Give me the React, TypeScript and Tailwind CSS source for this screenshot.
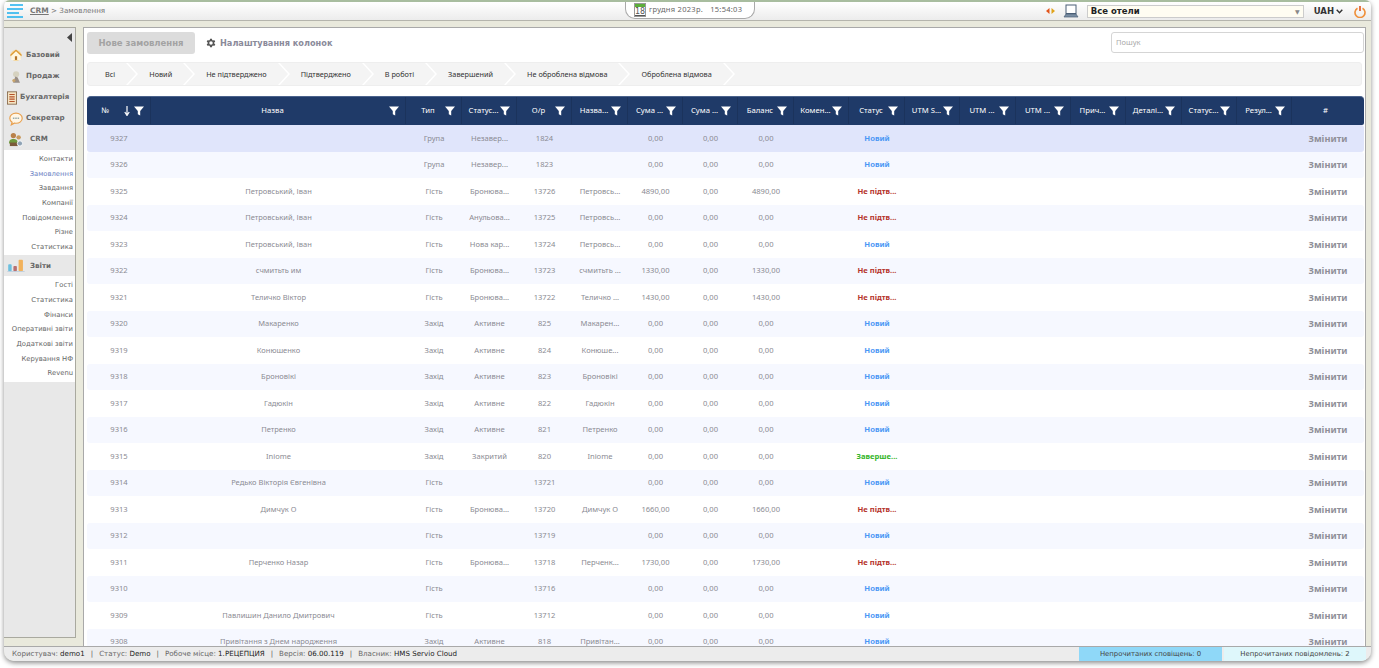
import React from "react";

const GRID =
  "grid grid-cols-[64px_255px_56px_55px_55px_56px_55px_55px_56px_55px_56px_55px_56px_55px_55px_56px_55px_55px_72px]";

const Funnel = () => (
  <svg width="10" height="10" viewBox="0 0 10 10" className="shrink-0">
    <path d="M0 .5h10L6.2 5v4.6L3.8 8.2V5z" fill="#fff" />
  </svg>
);

const headers = [
  "Назва", "Тип", "Статус...", "О/р", "Назва...", "Сума ...", "Сума ...", "Баланс", "Комен...", "Статус",
  "UTM S...", "UTM ...", "UTM ...", "Прич...", "Деталі...", "Статус...", "Резул...",
];

type Row = [string, string, string, string, string, string, string, string, string, string];
const N = "Новий";
const R = "Не підтв...";
const rows: Row[] = [
  ["9327", "", "Група", "Незавер...", "1824", "", "0,00", "0,00", "0,00", N],
  ["9326", "", "Група", "Незавер...", "1823", "", "0,00", "0,00", "0,00", N],
  ["9325", "Петровський, Іван", "Гість", "Бронюва...", "13726", "Петровсь...", "4890,00", "0,00", "4890,00", R],
  ["9324", "Петровський, Іван", "Гість", "Анульова...", "13725", "Петровсь...", "0,00", "0,00", "0,00", R],
  ["9323", "Петровський, Іван", "Гість", "Нова кар...", "13724", "Петровсь...", "0,00", "0,00", "0,00", N],
  ["9322", "счмитьть им", "Гість", "Бронюва...", "13723", "счмитьть ...", "1330,00", "0,00", "1330,00", R],
  ["9321", "Теличко Віктор", "Гість", "Бронюва...", "13722", "Теличко ...", "1430,00", "0,00", "1430,00", R],
  ["9320", "Макаренко", "Захід", "Активне", "825", "Макарен...", "0,00", "0,00", "0,00", N],
  ["9319", "Конюшенко", "Захід", "Активне", "824", "Конюше...", "0,00", "0,00", "0,00", N],
  ["9318", "Броновікі", "Захід", "Активне", "823", "Броновікі", "0,00", "0,00", "0,00", N],
  ["9317", "Гадюкін", "Захід", "Активне", "822", "Гадюкін", "0,00", "0,00", "0,00", N],
  ["9316", "Петренко", "Захід", "Активне", "821", "Петренко", "0,00", "0,00", "0,00", N],
  ["9315", "Iniome", "Захід", "Закритий", "820", "Iniome", "0,00", "0,00", "0,00", "Заверше..."],
  ["9314", "Редько Вікторія Євгенівна", "Гість", "", "13721", "", "0,00", "0,00", "0,00", N],
  ["9313", "Димчук О", "Гість", "Бронюва...", "13720", "Димчук О", "1660,00", "0,00", "1660,00", R],
  ["9312", "", "Гість", "", "13719", "", "0,00", "0,00", "0,00", N],
  ["9311", "Перченко Назар", "Гість", "Бронюва...", "13718", "Перченк...", "1730,00", "0,00", "1730,00", R],
  ["9310", "", "Гість", "", "13716", "", "0,00", "0,00", "0,00", N],
  ["9309", "Павлишин Данило Дмитрович", "Гість", "", "13712", "", "0,00", "0,00", "0,00", N],
  ["9308", "Привітання з Днем народження", "Захід", "Активне", "818", "Привітан...", "0,00", "0,00", "0,00", N],
];

const tabs = ["Всі", "Новий", "Не підтверджено", "Підтверджено", "В роботі", "Завершений", "Не оброблена відмова", "Оброблена відмова"];

const IconBase = () => (
  <svg width="14" height="13" viewBox="0 0 19 16"><circle cx="9.5" cy="8" r="7.5" fill="#f6d79a" /><path d="M3 8l6.5-6L16 8v6H3z" fill="#fff7e0" /><path d="M2 8l7.500-7L17 8" fill="none" stroke="#dc9a35" strokeWidth="1.800" /><rect x="8" y="9" width="3" height="5" fill="#b5762a" /></svg>
);
const IconSale = () => (
  <svg width="13" height="14" viewBox="0 0 17 17"><circle cx="8" cy="5" r="4" fill="#d6d2c0" /><path d="M4 16l3-8 3 1 3 7z" fill="#9a8f86" /><circle cx="5" cy="13" r="2" fill="#c9a46a" /></svg>
);
const IconBook = () => (
  <svg width="10" height="14" viewBox="0 0 13 17"><rect x=".5" y=".5" width="12" height="16" fill="#f4e3c2" stroke="#7b5a3a" /><path d="M3 4h7M3 7h7M3 10h7M3 13h7" stroke="#b5532a" strokeWidth="1.5" /></svg>
);
const IconSec = () => (
  <svg width="14" height="14" viewBox="0 0 18 17"><path d="M9 1c4.500 0 8 2.800 8 6.500S13.500 14 9 14c-.8 0-1.500-.1-2.200-.2L3 16l1-3.300C2.200 11.500 1 9.600 1 7.500 1 3.800 4.500 1 9 1z" fill="#fff6e6" stroke="#e8a04f" strokeWidth="1.500" /><path d="M5 7.500h8" stroke="#9aa" strokeWidth="2" strokeDasharray="2 1" /></svg>
);
const IconCrm = () => (
  <svg width="14" height="15" viewBox="0 0 16 17"><circle cx="5" cy="4" r="3" fill="#b9814a" /><path d="M0 13c0-4 2-5 5-5s5 1 5 5z" fill="#6f9a3e" /><circle cx="11" cy="6" r="2.500" fill="#c99a5e" /><rect x="1" y="12" width="9" height="4" fill="#7a5a3a" /><circle cx="12.500" cy="13" r="3" fill="#8fa3b5" stroke="#fff" /></svg>
);
const IconRep = () => (
  <svg width="18" height="13" viewBox="0 0 20 15"><rect x="1" y="6" width="4" height="8" rx="1" fill="#6cc0df" /><rect x="7" y="8" width="4" height="6" rx="1" fill="#b97070" /><rect x="13" y="1" width="5" height="13" rx="1" fill="#f2b25c" /><path d="M0 14.500h20" stroke="#bcd" /></svg>
);

const Group = ({ icon, label, items, active }: { icon: React.ReactNode; label: string; items: string[]; active?: string }) => (
  <>
    <div className="h-[21px] flex items-center font-bold text-[7.1px] text-[#666]">
      <span className="w-[26px] flex justify-center pl-[2px] pr-[4px]">{icon}</span>
      <span>{label}</span>
    </div>
    <div className="bg-white pt-[2px] pb-[1px]">
      {items.map((i) => (
        <div key={i} className={`h-[14.650px] leading-[14.650px] text-right pr-[2px] text-[6.800px] whitespace-nowrap ${i === active ? "text-[#6b7fc4]" : "text-[#666]"}`}>
          {i}
        </div>
      ))}
    </div>
  </>
);

const Simple = ({ icon, label, narrow }: { icon: React.ReactNode; label: string; narrow?: boolean }) => (
  <div className="h-[21px] flex items-center font-bold text-[7.100px] text-[#666] whitespace-nowrap">
    <span className={`flex justify-center ${narrow ? "w-[16px] pl-[2px] pr-[2px]" : "w-[22px] pl-[3px] pr-[1px]"}`}>{icon}</span>
    <span>{label}</span>
  </div>
);

export default function App() {
  return (
    <div className="w-[1379px] h-[668px] bg-white overflow-hidden" style={{ fontFamily: "'DejaVu Sans', sans-serif" }}>
      <div className="ml-[4px] w-[1367px] h-[661px] flex flex-col rounded-b-[10px] rounded-t-[6px] overflow-hidden bg-[#e9e9dc] shadow-[0_2px_5px_rgba(0,0,0,0.45)]">
        <div className="h-[2px] shrink-0 bg-[#a8bd9f]" />
        <header className="h-[19px] shrink-0 flex items-center bg-gradient-to-b from-white to-[#ececec] border-b border-[#b5b5ad]">
          <svg width="17" height="14" viewBox="0 0 17 14" className="ml-[3px]">
            <path d="M3 1h13M0 5h16M0 9h12M0 13h16" stroke="#1cb0ee" strokeWidth="1.600" />
          </svg>
          <div className="ml-[6px] text-[7.200px] text-[#777] w-[595px] whitespace-nowrap">
            <span className="font-bold underline text-[#777] text-[7.500px]">CRM</span> &gt; Замовлення
          </div>
          <div className="h-[17px] -mt-[2px] w-[130px] bg-white border-x border-b border-[#a9a9a9] rounded-b-[10px] flex items-center pl-[8px] gap-[3px] text-[7.500px] tracking-[0.3px] text-[#666] whitespace-nowrap" style={{ fontFamily: "'Noto Sans', sans-serif" }}>
            <span className="flex flex-col w-[12px] h-[14px] border border-[#999] text-center text-[#555]">
              <span className="h-[3px] bg-[#5cae3a] shrink-0" />
              <span style={{ fontFamily: "'DejaVu Sans', sans-serif" }} className="text-[8px] leading-[9px] tracking-normal underline">18</span>
            </span>
            <span>грудня 2023р.</span>
            <span className="ml-[4px]">15:54:03</span>
          </div>
          <div className="ml-auto flex items-center">
            <svg width="9" height="6" viewBox="0 0 9 6"><path d="M0 3l3.500-3v6z" fill="#e2541b" /><path d="M9 3L5.500 0v6z" fill="#e0a31b" /></svg>
            <svg width="16" height="14" viewBox="0 0 16 14" className="ml-[8px]">
              <rect x="3" y="1" width="10" height="8.500" fill="#fff" stroke="#4a5f77" />
              <path d="M1 13l2-3h10l2 3z" fill="#7a8ea3" stroke="#4a5f77" strokeWidth=".7" />
            </svg>
            <div className="ml-[8px] w-[217px] h-[13px] bg-[#fffdf2] border border-[#ccc] flex items-center pl-[3px] text-[8.500px] font-bold text-[#222]">
              Все отели
              <span className="ml-auto mr-[3px] text-[6px] text-[#888]">▼</span>
            </div>
            <div className="ml-[10px] text-[8.500px] font-bold text-[#333] flex items-center gap-[2px]">
              UAH
              <svg width="7" height="5" viewBox="0 0 7 5"><path d="M.7 .8L3.500 3.800 6.300 .8" fill="none" stroke="#333" strokeWidth="1.400" /></svg>
            </div>
            <svg width="12" height="13" viewBox="0 0 12 13" className="ml-[11px] mr-[5px]">
              <path d="M3.500 3.200a5 5 0 1 0 5 0" fill="none" stroke="#ef8f3a" strokeWidth="1.600" />
              <path d="M6 1v5" stroke="#e0501b" strokeWidth="1.600" />
            </svg>
          </div>
        </header>

        <div className="flex-1 min-h-0 flex pt-[6px]">
          <aside className="w-[72px] h-[611px] shrink-0 bg-[#e8e8e8] border-r border-b border-t border-[#a9a99f] overflow-hidden">
            <div className="h-[14px] flex justify-end items-center pr-[3px] pt-[5px]">
              <svg width="5" height="9" viewBox="0 0 5 9"><path d="M5 0v9L0 4.500z" fill="#444" /></svg>
            </div>
            <div className="mt-[3px]">
              <Simple icon={<IconBase />} label="Базовий" />
              <Simple icon={<IconSale />} label="Продаж" />
              <Simple icon={<IconBook />} label="Бухгалтерія" narrow />
              <Simple icon={<IconSec />} label="Секретар" />
              <Group icon={<IconCrm />} label="CRM" active="Замовлення" items={["Контакти", "Замовлення", "Завдання", "Компанії", "Повідомлення", "Різне", "Статистика"]} />
              <Group icon={<IconRep />} label="Звіти" items={["Гості", "Статистика", "Фінанси", "Оперативні звіти", "Додаткові звіти", "Керування НФ", "Revenu"]} />
            </div>
          </aside>

          <main className="ml-[7px] w-[1283px] h-[619px] bg-white border-t border-l border-r border-[#a9a9a9] overflow-hidden px-[3px] pt-[4px]">
            <div className="flex items-start h-[24px]">
              <div className="w-[108px] h-[22px] rounded-[3px] bg-[#dcdcdc] flex items-center justify-center text-[8.500px] font-bold text-[#a3a3a3]">
                Нове замовлення
              </div>
              <div className="ml-[10px] h-[22px] flex items-center gap-[3px] text-[8.200px] font-bold text-[#8a8a9a] whitespace-nowrap">
                <svg width="12" height="12" viewBox="0 0 24 24"><path fill="#555" d="M19.400 13a7.500 7.500 0 0 0 0-2l2.100-1.600-2-3.500-2.500 1a7.500 7.500 0 0 0-1.700-1L15 3.300h-4l-.4 2.600a7.500 7.500 0 0 0-1.700 1l-2.500-1-2 3.500L6.500 11a7.500 7.500 0 0 0 0 2l-2.100 1.600 2 3.500 2.500-1a7.500 7.500 0 0 0 1.700 1l.4 2.600h4l.4-2.600a7.500 7.500 0 0 0 1.700-1l2.500 1 2-3.500zM13 15.500a3.500 3.500 0 1 1 0-7 3.500 3.500 0 0 1 0 7z" transform="translate(-1)" /></svg>
                Налаштування колонок
              </div>
              <div className="ml-auto mr-[-2px] w-[253px] h-[21px] border border-[#d5d5d5] rounded-[3px] flex items-center pl-[4px] text-[7.500px] text-[#aaa]" style={{ fontFamily: "'Noto Sans', sans-serif" }}>
                Пошук
              </div>
            </div>
            <div className="mt-[6px] h-[24px] w-full rounded-[3px] bg-[#f4f4f4] border border-[#eee] flex items-center pl-[17px] text-[7.300px] text-[#333] whitespace-nowrap overflow-hidden" style={{ fontFamily: "'Noto Sans', sans-serif" }}>
              {tabs.map((t) => (
                <React.Fragment key={t}>
                  <span>{t}</span>
                  <svg width="12" height="24" viewBox="0 0 12 24" className="mx-[11px] shrink-0">
                    <path d="M0 0l11 12L0 24" fill="none" stroke="#fff" strokeWidth="1.500" />
                  </svg>
                </React.Fragment>
              ))}
            </div>

            <div className="mt-[10px] w-[1277px]" style={{ fontFamily: "'Noto Sans', sans-serif" }}>
              <div className={`${GRID} h-[29.200px] pb-[1px] bg-[#1f3a68] rounded-t-[4px] rounded-b-[2px] text-white text-[7.700px] border-t border-[#4b638c]`}>
                <div className="flex items-center border-r border-[#1b335c] pl-[14px] pr-[6px]">
                  <span>№</span>
                  <svg width="6" height="10" viewBox="0 0 6 10" className="ml-auto mr-[4px]"><path d="M3 0v8M.8 6L3 9.500 5.200 6" fill="none" stroke="#fff" strokeWidth="1.200" /></svg>
                  <Funnel />
                </div>
                {headers.map((h, i) => (
                  <div key={i} className="flex items-center border-r border-[#1b335c] pr-[6px] pl-[5px] whitespace-nowrap">
                    <span className="flex-1 text-center">{h}</span>
                    <Funnel />
                  </div>
                ))}
                <div className="flex items-center justify-center pr-[5px]">#</div>
              </div>
              {rows.map((r, i) => {
                const bg = i === 0 ? "bg-[#e0e5fb]" : i % 2 === 1 ? "bg-[#f6f8ff]" : "bg-white";
                const st = r[9];
                const stCls = st === N ? "text-[#4a97f5]" : st === R ? "text-[#b5332b]" : "text-[#34b52a]";
                return (
                  <div key={r[0]} className={`${GRID} h-[26.500px] items-center rounded-[3px] text-[7.600px] text-[#8b8b93] whitespace-nowrap ${bg}`}>
                    <div className="text-center">{r[0]}</div>
                    <div className="text-center text-[7.500px]">{r[1]}</div>
                    <div className="text-center">{r[2]}</div>
                    <div className="text-center">{r[3]}</div>
                    <div className="text-center">{r[4]}</div>
                    <div className="text-center">{r[5]}</div>
                    <div className="text-center">{r[6]}</div>
                    <div className="text-center">{r[7]}</div>
                    <div className="text-center">{r[8]}</div>
                    <div />
                    <div className={`text-center font-bold ${stCls}`}>{st}</div>
                    <div /><div /><div /><div /><div /><div /><div />
                    <div className="text-center font-bold text-[9.200px] text-[#8f8f98]">Змінити</div>
                  </div>
                );
              })}
            </div>
          </main>
        </div>

        <footer className="h-[15px] shrink-0 flex items-center bg-[#ececec] border-t border-[#a9a9a9] text-[6.900px] text-[#666] whitespace-nowrap">
          <div className="pl-[8px] flex-1 text-[7.100px]">
            Користувач: <span className="text-[#222]">demo1</span>
            <span className="mx-[6px] text-[#555]">|</span>Статус: <span className="text-[#222]">Demo</span>
            <span className="mx-[6px] text-[#555]">|</span>Робоче місце: <span className="text-[#222]">1.РЕЦЕПЦИЯ</span>
            <span className="mx-[6px] text-[#555]">|</span>Версія: <span className="text-[#222]">06.00.119</span>
            <span className="mx-[6px] text-[#555]">|</span>Власник: <span className="text-[#222]">HMS Servio Cloud</span>
          </div>
          <div className="w-[143px] h-full bg-[#8fd8f8] flex items-center justify-center text-[#444]">Непрочитаних сповіщень: 0</div>
          <div className="ml-[2px] mr-[5px] w-[142px] h-full bg-[#def7fb] flex items-center justify-center text-[#444]">Непрочитаних повідомлень: 2</div>
        </footer>
      </div>
    </div>
  );
}
